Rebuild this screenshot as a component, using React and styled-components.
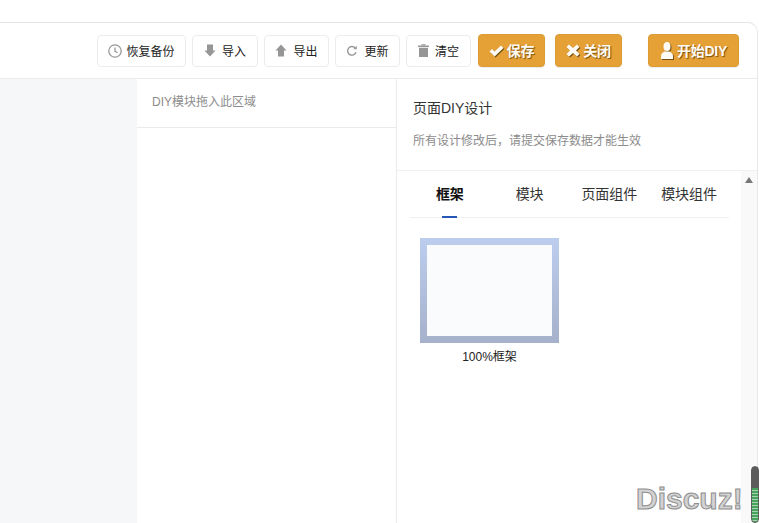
import styled, { createGlobalStyle } from 'styled-components'

const GlobalStyle = createGlobalStyle`
	html, body {
		margin: 0;
		height: 100%;
		background: #fff;
		overflow: hidden;
		font-family: 'Liberation Sans', 'Noto Sans CJK SC', sans-serif;
	}
	#root {
		height: 100%;
	}
`

const Page = styled.div`
	position: relative;
	height: 523px;
	padding-top: 22px;
	box-sizing: border-box;
`

const Frame = styled.div`
	height: 100%;
	width: 758px;
	box-sizing: border-box;
	display: flex;
	flex-direction: column;
	border-top: 1px solid #e4e4e4;
	border-right: 1px solid #e8e8e8;
	border-top-right-radius: 10px;
`

const Toolbar = styled.div`
	height: 56px;
	flex: none;
	box-sizing: border-box;
	display: flex;
	justify-content: flex-end;
	align-items: center;
	padding: 0 18px 0 0;
	border-bottom: 1px solid #ebebeb;
`

const Button = styled.button`
	height: 32px;
	width: ${(p) => p.$w}px;
	margin-left: ${(p) => p.$gap}px;
	padding: 0;
	box-sizing: border-box;
	display: flex;
	align-items: center;
	justify-content: center;
	gap: ${(p) => p.$iconGap ?? 6}px;
	background: #fff;
	border: 1px solid #ececec;
	border-radius: 4px;
	color: #222;
	font: 12px 'Liberation Sans', 'Noto Sans CJK SC', sans-serif;
`

const ActionButton = styled(Button)`
	height: 33px;
	margin-top: -1px;
	gap: 3px;
	background: #e5a136;
	border: 1px solid #dc9b33;
	color: #fdfbf4;
	font-weight: 700;
	font-size: 14px;
	letter-spacing: -0.3px;
	text-shadow: 1px 1px 1px rgba(110, 70, 10, 0.9);
	box-shadow: 0 1px 1px rgba(0, 0, 0, 0.08);
`

const Body = styled.div`
	flex: 1;
	min-height: 0;
	display: flex;
`

const LeftPane = styled.div`
	width: 137px;
	flex: none;
	background: #f5f7f9;
`

const MiddlePane = styled.div`
	width: 260px;
	flex: none;
	box-sizing: border-box;
	border-right: 1px solid #ebebeb;
`

const DropHint = styled.div`
	height: 49px;
	box-sizing: border-box;
	padding-left: 15px;
	line-height: 47px;
	font-size: 12px;
	color: #8c8c8c;
	border-bottom: 1px solid #ebebeb;
`

const RightPane = styled.div`
	flex: 1;
	min-width: 0;
	display: flex;
	flex-direction: column;
`

const Intro = styled.div`
	height: 92px;
	flex: none;
	box-sizing: border-box;
	padding: 19px 0 0 16px;
	border-bottom: 1px solid #f0f0f0;
`

const IntroTitle = styled.div`
	font-size: 14px;
	line-height: 20px;
	color: #333;
`

const IntroText = styled.div`
	margin-top: 13px;
	font-size: 12px;
	line-height: 20px;
	color: #8c8c8c;
`

const DesignArea = styled.div`
	flex: 1;
	min-height: 0;
	display: flex;
`

const DesignContent = styled.div`
	flex: 1;
	min-width: 0;
	padding: 0 12px 0 13px;
`

const Tabs = styled.div`
	display: flex;
	height: 46px;
	border-bottom: 1px solid #f0f0f0;
`

const Tab = styled.div`
	position: relative;
	flex: 1;
	text-align: center;
	line-height: 47px;
	font-size: 14px;
	color: ${(p) => (p.$active ? '#111' : '#333')};
	font-weight: ${(p) => (p.$active ? 700 : 400)};

	&::after {
		content: '';
		display: ${(p) => (p.$active ? 'block' : 'none')};
		position: absolute;
		left: 50%;
		bottom: -1px;
		width: 15px;
		height: 2px;
		margin-left: -8px;
		background: #2457b5;
	}
`

const FrameCard = styled.div`
	width: 139px;
	margin: 20px 0 0 10px;
	text-align: center;
	font-size: 12px;
	color: #222;
`

const Thumb = styled.div`
	height: 105px;
	box-sizing: border-box;
	padding: 7px;
	background: linear-gradient(180deg, #bccdee 0%, #a6b1cb 100%);
`

const ThumbInner = styled.div`
	height: 100%;
	background: #f9fbfd;
`

const Caption = styled.div`
	margin-top: 6px;
	line-height: 17px;
`

const ScrollTrack = styled.div`
	width: 16px;
	flex: none;
	background: #f9f9f9;
	display: flex;
	justify-content: center;
	padding-top: 6px;
`

const ScrollArrow = styled.div`
	width: 0;
	height: 0;
	border-left: 4.5px solid transparent;
	border-right: 4.5px solid transparent;
	border-bottom: 6px solid #777;
`

const Grip = styled.div`
	position: absolute;
	left: 751px;
	top: 466px;
	width: 8px;
	height: 57px;
	box-sizing: border-box;
	border: 1px solid #5c5c5c;
	border-radius: 4px;
	background:
		linear-gradient(180deg, #5c5c5c 0 21px, transparent 21px),
		repeating-linear-gradient(180deg, #46a35c 0 2px, #a9d3b0 2px 3px);
`

const Watermark = styled.div`
	position: absolute;
	left: 636px;
	top: 480px;
	font: 700 30px/37px 'Liberation Sans', sans-serif;
	color: #d2d2d2;
	-webkit-text-stroke: 1px #8e8e8e;
`

const Glyph = styled.svg`
	flex: none;
	display: block;
	filter: ${(p) => (p.$shadow ? 'drop-shadow(1px 1px 0.6px rgba(90, 60, 10, 0.8))' : 'none')};
`

const Clock = () => (
	<Glyph width='14' height='14' viewBox='0 0 14 14' fill='none' stroke='#9a9a9a' strokeWidth='1.3'>
		<circle cx='7' cy='7' r='6.2' />
		<path d='M7 3.4V7.4L9.6 8.8' />
	</Glyph>
)

const ArrowDown = () => (
	<Glyph width='12' height='13' viewBox='0 0 12 13' fill='#969696'>
		<path d='M3 .5h6v6h2.500L6 12.500.5 6.500H3z' />
	</Glyph>
)

const ArrowUp = () => (
	<Glyph width='12' height='13' viewBox='0 0 12 13' fill='#969696'>
		<path d='M6 .5l5.500 6H9v6H3v-6H.5z' />
	</Glyph>
)

const Refresh = () => (
	<Glyph width='12' height='12' viewBox='0 0 12 12' fill='none' stroke='#969696' strokeWidth='1.4'>
		<path d='M10 7.200A4.300 4.300 0 1 1 9.200 3' />
		<path d='M10.800 .8v3.400H7.400z' fill='#969696' stroke='none' />
	</Glyph>
)

const Trash = () => (
	<Glyph width='11' height='13' viewBox='0 0 11 13' fill='#969696'>
		<path d='M0 1.500h11V3H0zM3.500.2h4v1h-4zM1 3.800h9V13H1z' />
	</Glyph>
)

const Check = () => (
	<Glyph $shadow width='15' height='13' viewBox='0 0 15 13' fill='#fdfbf4'>
		<path d='M0.500 7.500 3 5l2.600 2.600L12 1.500l2.500 2.400L5.600 12.500z' />
	</Glyph>
)

const Cross = () => (
	<Glyph $shadow width='14' height='13' viewBox='0 0 14 13' fill='#fdfbf4'>
		<path d='M3 .5 7 4l4-3.500 2.500 2.500L10 6.500l3.500 3.500L11 12.500 7 9l-4 3.500L.5 10 4 6.500.5 3z' />
	</Glyph>
)

const User = () => (
	<Glyph $shadow width='14' height='18' viewBox='0 0 14 18' fill='#fdfbf4'>
		<ellipse cx='7' cy='5.500' rx='3.500' ry='4.500' />
		<path d='M1 18v-3c0-2.500 1.500-3.500 4-4.500h4c2.500 1 4 2 4 4.500v3z' />
	</Glyph>
)

const tools = [
	{ label: '恢复备份', icon: <Clock />, w: 89, gap: 0, iconGap: 4 },
	{ label: '导入', icon: <ArrowDown />, w: 66, gap: 6 },
	{ label: '导出', icon: <ArrowUp />, w: 65, gap: 6 },
	{ label: '更新', icon: <Refresh />, w: 65, gap: 6 },
	{ label: '清空', icon: <Trash />, w: 65, gap: 6 },
]

const actions = [
	{ label: '保存', icon: <Check />, w: 67, gap: 7 },
	{ label: '关闭', icon: <Cross />, w: 67, gap: 10 },
	{ label: '开始DIY', icon: <User />, w: 91, gap: 26 },
]

const tabs = ['框架', '模块', '页面组件', '模块组件']

const App = () => {
	return (
		<Page>
			<GlobalStyle />
			<Frame>
				<Toolbar>
					{tools.map(({ label, icon, w, gap, iconGap }) => (
						<Button
							key={label}
							$w={w}
							$gap={gap}
							$iconGap={iconGap}
						>
							{icon}
							{label}
						</Button>
					))}
					{actions.map(({ label, icon, w, gap }) => (
						<ActionButton
							key={label}
							$w={w}
							$gap={gap}
						>
							{icon}
							{label}
						</ActionButton>
					))}
				</Toolbar>
				<Body>
					<LeftPane />
					<MiddlePane>
						<DropHint>DIY模块拖入此区域</DropHint>
					</MiddlePane>
					<RightPane>
						<Intro>
							<IntroTitle>页面DIY设计</IntroTitle>
							<IntroText>所有设计修改后，请提交保存数据才能生效</IntroText>
						</Intro>
						<DesignArea>
							<DesignContent>
								<Tabs>
									{tabs.map((tab, i) => (
										<Tab
											key={tab}
											$active={i === 0}
										>
											{tab}
										</Tab>
									))}
								</Tabs>
								<FrameCard>
									<Thumb>
										<ThumbInner />
									</Thumb>
									<Caption>100%框架</Caption>
								</FrameCard>
							</DesignContent>
							<ScrollTrack>
								<ScrollArrow />
							</ScrollTrack>
						</DesignArea>
					</RightPane>
				</Body>
			</Frame>
			<Watermark>Discuz!</Watermark>
			<Grip />
		</Page>
	)
}

export default App
